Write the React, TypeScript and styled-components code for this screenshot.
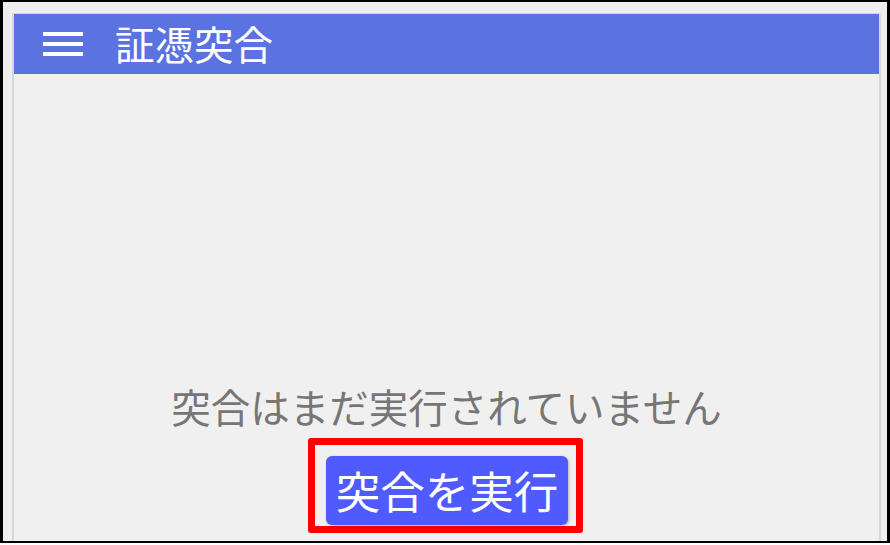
import React from "react";
import styled, { createGlobalStyle } from "styled-components";

const Global = createGlobalStyle`
  html, body { margin: 0; padding: 0; background: #ffffff; }
  body { font-family: "Noto Sans CJK JP", "Noto Sans", sans-serif; }
`;

const Frame = styled.div`
  box-sizing: border-box;
  width: 890px;
  height: 543px;
  border-style: solid;
  border-color: #000;
  border-width: 2px 3px 2px 3px;
  background: #efefef;
  padding: 11px 6px 0 9px;
  display: flex;
  overflow: hidden;
`;

const Panel = styled.div`
  flex: 1;
  display: flex;
  flex-direction: column;
  border-style: solid;
  border-color: #d6d6d6;
  border-width: 1px 2px 0 2px;
  background: #f0f0f0;
  margin-bottom: -4px;
`;

const Header = styled.header`
  height: 60px;
  background: #5b73e1;
  display: flex;
  align-items: center;
  padding-left: 29px;
  gap: 32px;
  color: #fff;
`;

const Title = styled.h1`
  margin: 0;
  font-size: 39.5px;
  font-weight: 400;
  line-height: 1;
  letter-spacing: 0;
  transform: translateY(-1px);
`;

const Content = styled.main`
  flex: 1;
  display: flex;
  flex-direction: column;
  align-items: center;
  justify-content: flex-end;
  padding-bottom: 12px;
`;

const Message = styled.p`
  margin: 0 0 8px;
  font-size: 39.5px;
  line-height: 48px;
  color: #767676;
  font-weight: 400;
`;

const Highlight = styled.div`
  border: 7px solid #ff0000;
  border-radius: 3px;
  padding: 11px 8px 1px 11px;
  transform: translateX(-1px);
`;

const RunButton = styled.button`
  display: block;
  width: 242px;
  height: 69px;
  border: none;
  border-radius: 6px;
  background: #4f5bff;
  color: #fff;
  font-family: "Noto Sans CJK JP", "Noto Sans", sans-serif;
  font-size: 44.5px;
  line-height: 1;
  padding: 0;
  box-shadow: 1px 1px 3px rgba(0, 0, 0, 0.25);
  cursor: pointer;
`;

const MenuIcon = () => (
  <svg width="40" height="24" viewBox="0 0 40 24" aria-hidden="true">
    <rect x="0" y="0" width="40" height="4" fill="#fff" />
    <rect x="0" y="10" width="40" height="4" fill="#fff" />
    <rect x="0" y="20" width="40" height="4" fill="#fff" />
  </svg>
);

export default function App() {
  return (
    <>
      <Global />
      <Frame>
        <Panel>
          <Header>
            <MenuIcon />
            <Title>証憑突合</Title>
          </Header>
          <Content>
            <Message>突合はまだ実行されていません</Message>
            <Highlight>
              <RunButton>突合を実行</RunButton>
            </Highlight>
          </Content>
        </Panel>
      </Frame>
    </>
  );
}
